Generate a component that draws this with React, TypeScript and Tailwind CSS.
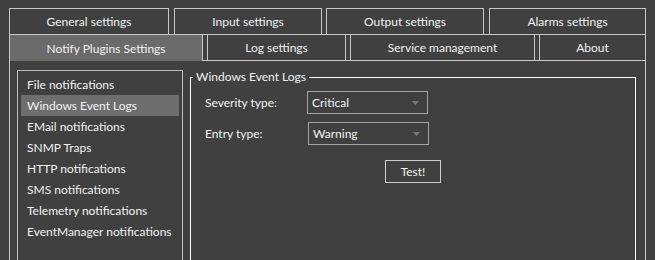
const TOP_TABS = [
  { label: "General settings", w: "w-[160px]", ml: "ml-0" },
  { label: "Input settings", w: "w-[148px]", ml: "ml-[5px]" },
  { label: "Output settings", w: "w-[158px]", ml: "ml-[4px]" },
  { label: "Alarms settings", w: "w-[157px]", ml: "ml-[5px]" },
];

const BOTTOM_TABS = [
  { label: "Notify Plugins Settings", w: "w-[194px]", ml: "ml-0", active: true },
  { label: "Log settings", w: "w-[139px]", ml: "ml-[4px]", active: false },
  { label: "Service management", w: "w-[185px]", ml: "ml-[4px]", active: false },
  { label: "About", w: "w-[107px]", ml: "ml-[4px]", active: false },
];

const PLUGINS = [
  "File notifications",
  "Windows Event Logs",
  "EMail notifications",
  "SNMP Traps",
  "HTTP notifications",
  "SMS notifications",
  "Telemetry notifications",
  "EventManager notifications",
];

function Combo({ value, shift }: { value: string; shift: string }) {
  return (
    <div
      className={`flex h-[23px] w-[121px] items-center justify-between border border-[#a4a4a4] pl-[4px] pr-[8px] pt-px ${shift}`}
    >
      <span>{value}</span>
      {/* dropdown caret */}
      <svg width="7" height="4" viewBox="0 0 7 4">
        <path d="M0 0 H7 L3.5 4 Z" fill="#7a7a7a" />
      </svg>
    </div>
  );
}

export default function App() {
  return (
    <div
      className="h-[260px] w-[655px] overflow-hidden whitespace-nowrap bg-[#404040] pl-[9px] pt-2 text-[12px] text-[#f2f2f2]"
      style={{ fontFamily: 'Lato, "Open Sans", sans-serif' }}
    >
      {/* Tab strip, first row */}
      <div className="flex">
        {TOP_TABS.map((tab) => (
          <div
            key={tab.label}
            className={`flex h-[27px] items-center justify-center border border-[#c8c8c8] pt-px ${tab.w} ${tab.ml}`}
          >
            {tab.label}
          </div>
        ))}
      </div>

      {/* Tab strip, second row */}
      <div className="-mt-px flex items-start">
        {BOTTOM_TABS.map((tab) =>
          tab.active ? (
            <div
              key={tab.label}
              className={`relative z-10 -mb-px flex h-[27px] items-center justify-center border border-b-0 border-[#c8c8c8] bg-[#6b6b6b] pt-px ${tab.w} ${tab.ml}`}
            >
              {tab.label}
            </div>
          ) : (
            <div
              key={tab.label}
              className={`flex h-[26px] items-center justify-center border border-b-0 border-[#c8c8c8] pt-px ${tab.w} ${tab.ml}`}
            >
              {tab.label}
            </div>
          ),
        )}
      </div>

      {/* Page body */}
      <div className="flex h-[220px] w-[637px] items-start border border-[#c8c8c8] pl-[7px] pt-[9px]">
        <ul className="h-[200px] w-[166px] shrink-0 border border-[#bdbdbd] px-[3px] pt-[3px]">
          {PLUGINS.map((name, i) => (
            <li
              key={name}
              className={`flex h-[21px] items-center px-[6px] pt-px ${i === 1 ? "bg-[#6e6e6e]" : ""}`}
            >
              {name}
            </li>
          ))}
        </ul>

        <fieldset className="-mt-px ml-[7px] h-[200px] w-[446px] border border-white">
          <legend className="ml-[2px] px-[3px] leading-[16px]">Windows Event Logs</legend>

          <div className="px-[14px]">
            <div className="mt-[6px] flex items-center">
              <span className="w-[102px] pt-px">Severity type:</span>
              <Combo value="Critical" shift="ml-0" />
            </div>
            <div className="mt-[8px] flex items-center">
              <span className="w-[102px] pt-px">Entry type:</span>
              <Combo value="Warning" shift="ml-px" />
            </div>
          </div>

          <div className="mt-[15px] flex justify-center">
            <button className="flex h-[23px] w-[56px] items-center justify-center border border-[#cfcfcf] pt-px">
              Test!
            </button>
          </div>
        </fieldset>
      </div>
    </div>
  );
}
